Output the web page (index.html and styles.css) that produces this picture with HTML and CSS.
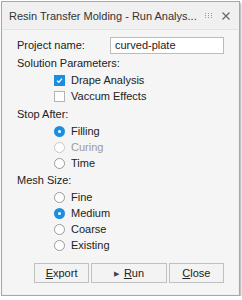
FILE: index.html
```html
<!DOCTYPE html>
<html lang="en">
<head>
    <meta charset="UTF-8">
    <title>Resin Transfer Molding - Run Analysis</title>
    <link rel="stylesheet" href="styles.css">
</head>
<body>
    <div class="dialog">
        <div class="titlebar">
            <span class="title">Resin Transfer Molding - Run Analys...</span>
            <span class="grip">
                <svg width="8" height="5" viewBox="0 0 8 5">
                    <rect x="0" y="0" width="1" height="1" fill="#999"/>
                    <rect x="3" y="0" width="1" height="1" fill="#999"/>
                    <rect x="6" y="0" width="1" height="1" fill="#999"/>
                    <rect x="0" y="2" width="1" height="1" fill="#999"/>
                    <rect x="3" y="2" width="1" height="1" fill="#999"/>
                    <rect x="6" y="2" width="1" height="1" fill="#999"/>
                    <rect x="0" y="4" width="1" height="1" fill="#999"/>
                    <rect x="3" y="4" width="1" height="1" fill="#999"/>
                    <rect x="6" y="4" width="1" height="1" fill="#999"/>
                </svg>
            </span>
            <span class="close">
                <svg width="8" height="8" viewBox="0 0 8 8">
                    <path d="M0.5 0.5 L7.5 7.5 M7.5 0.5 L0.5 7.5" stroke="#666" stroke-width="1.2"/>
                </svg>
            </span>
        </div>

        <div class="content">
            <div class="row project">
                <label class="lbl">Project name:</label>
                <input class="field" type="text" value="curved-plate">
            </div>

            <div class="section">Solution Parameters:</div>
            <div class="option">
                <span class="check on">
                    <svg width="9" height="9" viewBox="0 0 9 9">
                        <path d="M2 4.6 L3.8 6.3 L7 2.6" fill="none" stroke="#fff" stroke-width="1.3"/>
                    </svg>
                </span>
                <span>Drape Analysis</span>
            </div>
            <div class="option">
                <span class="check"></span>
                <span>Vaccum Effects</span>
            </div>

            <div class="section stop">Stop After:</div>
            <div class="option"><span class="radio on"></span><span>Filling</span></div>
            <div class="option disabled"><span class="radio"></span><span>Curing</span></div>
            <div class="option"><span class="radio"></span><span>Time</span></div>

            <div class="section mesh">Mesh Size:</div>
            <div class="option"><span class="radio"></span><span>Fine</span></div>
            <div class="option"><span class="radio on"></span><span>Medium</span></div>
            <div class="option"><span class="radio"></span><span>Coarse</span></div>
            <div class="option"><span class="radio"></span><span>Existing</span></div>

            <div class="buttons">
                <button class="btn btn-export"><u>E</u>xport</button>
                <button class="btn btn-run"><span class="play">&#9654;</span><u>R</u>un</button>
                <button class="btn btn-close"><u>C</u>lose</button>
            </div>
        </div>
    </div>
</body>
</html>
```

FILE: styles.css
```css
body {
    margin: 0;
    background: #ffffff;
    font-family: "Liberation Sans", Arial, sans-serif;
    font-size: 11px;
    color: #222;
}
.dialog {
    margin: 1px 0 0 1px;
    width: 237px;
    height: 293px;
    background: #f0f0f0;
    border: 1px solid #a8a8a8;
    box-shadow: 1px 2px 2px rgba(0, 0, 0, 0.35);
    display: flex;
    flex-direction: column;
}
.titlebar {
    height: 27px;
    display: flex;
    align-items: center;
    padding: 0 9px 0 7px;
}
.title {
    flex: 1;
    font-size: 11px;
    color: #333;
    white-space: nowrap;
}
.grip {
    display: flex;
    margin-right: 9px;
}
.close {
    display: flex;
}
.content {
    flex: 1;
    margin: 0 1px 1px 1px;
    background: #f5f5f5;
    border-top: 1px solid #e2e2e2;
    padding: 6px 14px 0 14px;
}
.row {
    display: flex;
    align-items: center;
}
.project {
    height: 18px;
    margin-bottom: 1px;
}
.lbl {
    width: 94px;
}
.field {
    width: 114px;
    height: 17px;
    box-sizing: border-box;
    border: 1px solid #bcbcbc;
    background: #fff;
    padding: 0 4px;
    font-family: "Liberation Sans", Arial, sans-serif;
    font-size: 11px;
    color: #222;
    margin: 0;
}
.section {
    height: 17px;
    line-height: 17px;
}
.section.stop {
    margin-top: 2px;
}
.section.mesh {
    margin-top: 1px;
}
.option {
    height: 16px;
    display: flex;
    align-items: center;
    padding-left: 37px;
}
.option.disabled {
    color: #9a9a9a;
}
.check {
    width: 9px;
    height: 9px;
    border: 1px solid #b4b4b4;
    background: #fff;
    margin-right: 6px;
    display: flex;
}
.check.on {
    background: #1a8fe0;
    border-color: #1a8fe0;
}
.radio {
    width: 9px;
    height: 9px;
    border: 1px solid #9a9a9a;
    border-radius: 50%;
    background: #fff;
    margin-right: 6px;
    box-sizing: content-box;
}
.disabled .radio {
    border-color: #c8c8c8;
}
.radio.on {
    width: 3px;
    height: 3px;
    border: 3px solid #1a8fe0;
    background: #fff;
    box-shadow: 0 0 0 1px #1a8fe0;
    margin: 0 7px 0 1px;
}
.buttons {
    display: flex;
    gap: 2px;
    margin-top: 10px;
    padding-left: 17px;
}
.btn {
    height: 20px;
    border: 1px solid #c0c0c0;
    background: #f3f3f3;
    font-family: "Liberation Sans", Arial, sans-serif;
    font-size: 11px;
    color: #222;
    padding: 0;
    margin: 0;
}
.btn-export {
    width: 56px;
}
.btn-run {
    width: 77px;
}
.btn-close {
    width: 56px;
}
.play {
    font-size: 7px;
    margin-right: 5px;
    color: #444;
    vertical-align: 1px;
}
```
